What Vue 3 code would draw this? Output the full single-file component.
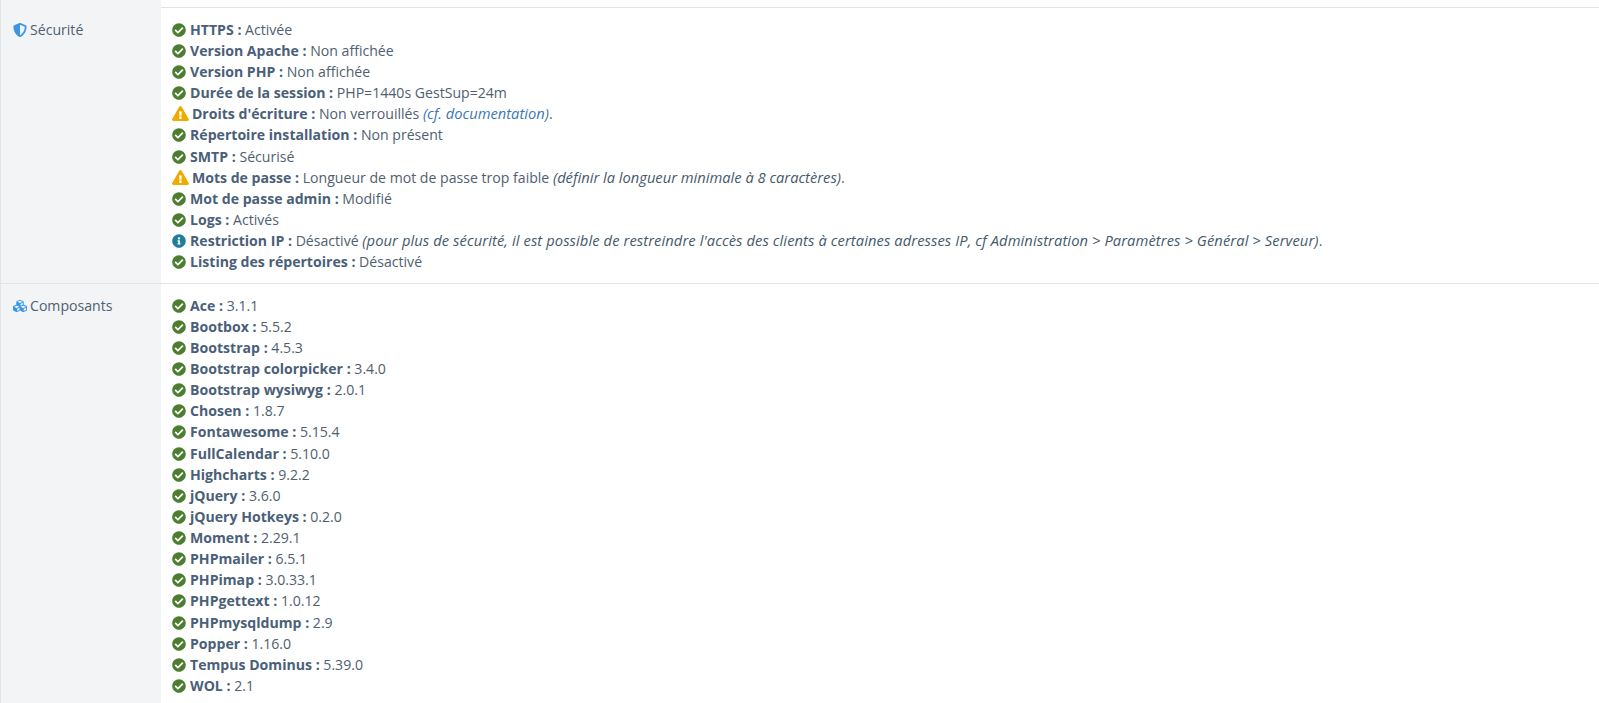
<template>
  <div class="page">
    <div class="row first">
      <div class="label"></div>
      <div class="value"></div>
    </div>
    <div v-for="section in sections" :key="section.name" class="row">
      <div class="label">
        <svg class="head-icon" :viewBox="section.box"><path :d="section.icon" /></svg>
        <span>{{ section.name }}</span>
      </div>
      <div class="value">
        <div v-for="item in section.items" :key="item.name" class="line">
          <svg class="state" :class="item.state || 'ok'" :viewBox="item.state === 'warn' ? '0 0 576 512' : '0 0 512 512'">
            <path :d="paths[item.state || 'ok']" />
          </svg>
          <b>{{ item.name }} :</b> {{ item.text }}
          <i v-if="item.note" :class="{ link: item.link, wide: item.state === 'info' }">{{ item.note }}</i><span v-if="item.end">{{ item.end }}</span>
        </div>
      </div>
    </div>
  </div>
</template>

<script setup>
const paths = {
  ok: 'M504 256c0 136.967-111.033 248-248 248S8 392.967 8 256 119.033 8 256 8s248 111.033 248 248zM227.314 387.314l184-184c6.248-6.248 6.248-16.379 0-22.627l-22.627-22.627c-6.248-6.249-16.379-6.249-22.628 0L216 308.118l-70.059-70.059c-6.248-6.248-16.379-6.248-22.628 0l-22.627 22.627c-6.248 6.248-6.248 16.379 0 22.627l104 104c6.249 6.249 16.379 6.249 22.628.001z',
  warn: 'M569.517 440.013C587.975 472.007 564.806 512 527.94 512H48.054c-36.937 0-59.999-40.055-41.577-71.987L246.423 23.985c18.467-32.009 64.72-31.951 83.154 0l239.94 416.028zM288 354c-25.405 0-46 20.595-46 46s20.595 46 46 46 46-20.595 46-46-20.595-46-46-46zm-43.673-165.346l7.418 136c.347 6.364 5.609 11.346 11.982 11.346h48.546c6.373 0 11.635-4.982 11.982-11.346l7.418-136c.375-6.874-5.098-12.654-11.982-12.654h-63.383c-6.884 0-12.356 5.78-11.981 12.654z',
  info: 'M256 8C119.043 8 8 119.083 8 256c0 136.997 111.043 248 248 248s248-111.003 248-248C504 119.083 392.957 8 256 8zm0 110c23.196 0 42 18.804 42 42s-18.804 42-42 42-42-18.804-42-42 18.804-42 42-42zm56 254c0 6.627-5.373 12-12 12h-88c-6.627 0-12-5.373-12-12v-24c0-6.627 5.373-12 12-12h12v-64h-12c-6.627 0-12-5.373-12-12v-24c0-6.627 5.373-12 12-12h64c6.627 0 12 5.373 12 12v100h12c6.627 0 12 5.373 12 12v24z'
}

const sections = [
  {
    name: 'Sécurité',
    box: '0 0 512 512',
    icon: 'M466.5 83.7l-192-80a48.15 48.15 0 0 0-36.9 0l-192 80C27.7 91.1 16 108.6 16 128c0 198.5 114.5 335.7 221.5 380.3 11.8 4.9 25.1 4.9 36.9 0C360.1 472.6 496 349.3 496 128c0-19.4-11.7-36.9-29.5-44.3zM256.1 446.3l-.1-381 175.9 73.3c-3.3 151.4-82.1 261.1-175.8 307.7z',
    items: [
      { name: 'HTTPS', text: 'Activée' },
      { name: 'Version Apache', text: 'Non affichée' },
      { name: 'Version PHP', text: 'Non affichée' },
      { name: 'Durée de la session', text: 'PHP=1440s GestSup=24m' },
      { name: "Droits d'écriture", text: 'Non verrouillés', note: '(cf. documentation)', link: true, end: '.', state: 'warn' },
      { name: 'Répertoire installation', text: 'Non présent' },
      { name: 'SMTP', text: 'Sécurisé' },
      { name: 'Mots de passe', text: 'Longueur de mot de passe trop faible', note: '(définir la longueur minimale à 8 caractères)', end: '.', state: 'warn' },
      { name: 'Mot de passe admin', text: 'Modifié' },
      { name: 'Logs', text: 'Activés' },
      { name: 'Restriction IP', text: 'Désactivé', note: "(pour plus de sécurité, il est possible de restreindre l'accès des clients à certaines adresses IP, cf Administration > Paramètres > Général > Serveur)", end: '.', state: 'info' },
      { name: 'Listing des répertoires', text: 'Désactivé' }
    ]
  },
  {
    name: 'Composants',
    box: '0 0 512 512',
    icon: 'M488.6 250.2L392 214V105.5c0-15-9.3-28.4-23.4-33.7l-100-37.5c-8.1-3.1-17.1-3.1-25.3 0l-100 37.5c-14.1 5.3-23.4 18.7-23.4 33.7V214l-96.6 36.2C9.3 255.5 0 268.9 0 283.9V394c0 13.6 7.7 26.1 19.9 32.2l100 50c10.1 5.1 22.1 5.1 32.2 0l103.9-52 103.9 52c10.1 5.1 22.1 5.1 32.2 0l100-50c12.2-6.1 19.9-18.6 19.9-32.2V283.9c0-15-9.3-28.4-23.4-33.7zM358 214.8l-85 31.9v-68.2l85-37v73.3zM154 104.1l102-38.2 102 38.2v.6l-102 41.4-102-41.4v-.6zm84 291.1l-85 42.5v-79.1l85-38.8v75.4zm0-112l-102 41.4-102-41.4v-.6l102-38.2 102 38.2v.6zm240 112l-85 42.5v-79.1l85-38.8v75.4zm0-112l-102 41.4-102-41.4v-.6l102-38.2 102 38.2v.6z',
    items: [
      { name: 'Ace', text: '3.1.1' },
      { name: 'Bootbox', text: '5.5.2' },
      { name: 'Bootstrap', text: '4.5.3' },
      { name: 'Bootstrap colorpicker', text: '3.4.0' },
      { name: 'Bootstrap wysiwyg', text: '2.0.1' },
      { name: 'Chosen', text: '1.8.7' },
      { name: 'Fontawesome', text: '5.15.4' },
      { name: 'FullCalendar', text: '5.10.0' },
      { name: 'Highcharts', text: '9.2.2' },
      { name: 'jQuery', text: '3.6.0' },
      { name: 'jQuery Hotkeys', text: '0.2.0' },
      { name: 'Moment', text: '2.29.1' },
      { name: 'PHPmailer', text: '6.5.1' },
      { name: 'PHPimap', text: '3.0.33.1' },
      { name: 'PHPgettext', text: '1.0.12' },
      { name: 'PHPmysqldump', text: '2.9' },
      { name: 'Popper', text: '1.16.0' },
      { name: 'Tempus Dominus', text: '5.39.0' },
      { name: 'WOL', text: '2.1' }
    ]
  }
]
</script>

<style>
html, body {
  margin: 0;
  background: #fff;
}
</style>

<style scoped>
.page {
  height: 703px;
  overflow: hidden;
  font-family: "Open Sans", "Noto Sans", sans-serif;
  font-size: 14.1px;
  line-height: 21.13px;
  color: #4f6070;
}

.row {
  display: flex;
  border-top: 1px solid #e2e5e8;
}

.row.first {
  height: 7px;
  border-top: 0;
}

.label {
  box-sizing: border-box;
  width: 161px;
  flex: none;
  padding: 11px 0 0 12px;
  background: #f2f4f6;
  border-left: 1px solid #e2e5e8;
}

.label span {
  margin-left: 3px;
}

.value {
  padding: 10.8px 12px 10.6px 11px;
}

.line {
  white-space: nowrap;
}

.line b {
  font-weight: 700;
  color: #4a6078;
}

.line i {
  font-size: 14.7px;
  color: #44596c;
}

.line i.link {
  color: #3a78b0;
}

.line i.wide {
  letter-spacing: 0.1px;
}

.head-icon {
  width: 14px;
  height: 14px;
  vertical-align: -2px;
  fill: #3a96e6;
}

.state {
  height: 14px;
  margin-right: 4px;
  vertical-align: -2px;
}

.state.ok {
  fill: #4c7d30;
}

.state.warn {
  height: 15px;
  margin-right: 3px;
  fill: #f0ab00;
}

.state.info {
  fill: #1f7d9c;
}
</style>
